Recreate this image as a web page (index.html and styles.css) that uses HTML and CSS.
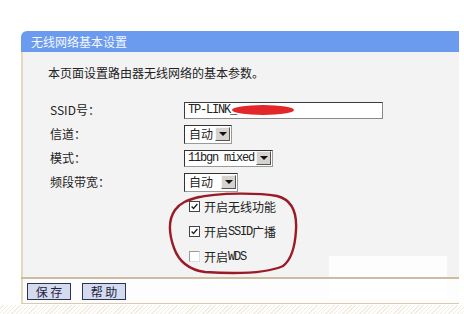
FILE: index.html
```html
<!DOCTYPE html>
<html lang="zh-CN">
<head>
<meta charset="utf-8">
<title>无线网络基本设置</title>
<link rel="stylesheet" href="styles.css">
</head>
<body>
<div class="page">
  <div class="panel">
    <div class="title">无线网络基本设置</div>
    <div class="content">
      <div class="intro">本页面设置路由器无线网络的基本参数。</div>
      <div class="form">
        <div class="label">SSID号：</div>
        <div class="ctl"><span class="input"><span class="mono">TP-LINK_</span><span class="blot"></span></span></div>
        <div class="label">信道：</div>
        <div class="ctl"><span class="sel w48"><span class="val">自动</span><span class="arrow"></span></span></div>
        <div class="label">模式：</div>
        <div class="ctl"><span class="sel w89"><span class="val mono">11bgn mixed</span><span class="arrow"></span></span></div>
        <div class="label">频段带宽：</div>
        <div class="ctl"><span class="sel w54"><span class="val">自动</span><span class="arrow"></span></span></div>
      </div>
      <div class="checks">
        <div class="chk"><span class="box"><svg width="11" height="11" viewBox="0 0 11 11"><path d="M2 5.5 L4.3 8 L9 2.5" fill="none" stroke="#222" stroke-width="1.6"/></svg></span>开启无线功能</div>
        <div class="chk"><span class="box"><svg width="11" height="11" viewBox="0 0 11 11"><path d="M2 5.5 L4.3 8 L9 2.5" fill="none" stroke="#222" stroke-width="1.6"/></svg></span>开启<span class="mono">SSID</span>广播</div>
        <div class="chk"><span class="box off"></span>开启<span class="mono">WDS</span></div>
      </div>
      <svg class="circle" width="150" height="95" viewBox="0 0 150 95">
        <path d="M30 8 C55 2 95 3 112 6 C128 10 132 24 131 40 C130 58 126 70 118 76 C100 84 70 84 40 82 C25 80 14 72 9 58 C4 44 3 30 10 20 C15 13 22 10 34 7" fill="none" stroke="#9a1b25" stroke-width="2.4" stroke-linecap="round"/>
      </svg>
      <div class="patch"></div>
    </div>
    <div class="divider"></div>
    <div class="btnbar">
      <span class="btn">保 存</span>
      <span class="btn">帮 助</span>
    </div>
    <div class="hatch"></div>
  </div>
</div>
</body>
</html>
```

FILE: styles.css
```css
html, body {
  margin: 0;
  padding: 0;
  background: #ffffff;
}
body {
  font-family: "Noto Sans CJK SC", "Liberation Sans", sans-serif;
  font-size: 12px;
  color: #222;
}
.page {
  padding: 31px 5px 0 21px;
}
.panel {
  width: 438px;
  position: relative;
}
.title {
  height: 21px;
  line-height: 21px;
  background: #6b9bef;
  border-top-left-radius: 6px;
  color: #f4f7ff;
  padding-left: 10px;
  font-size: 12px;
}
.content {
  position: relative;
  height: 225px;
  box-sizing: border-box;
  background: #f3f3f3;
  border-left: 2px solid #e4d8bf;
  padding: 13px 0 0 25px;
}
.intro {
  line-height: 16px;
  height: 16px;
  margin-bottom: 17px;
}
.form {
  display: grid;
  grid-template-columns: 134px auto;
  grid-auto-rows: 24px;
  padding-left: 2px;
}
.label {
  display: flex;
  align-items: center;
  line-height: 14px;
}
.ctl {
  display: flex;
  align-items: center;
}
.mono {
  font-family: "Liberation Mono", "DejaVu Sans Mono", monospace;
  letter-spacing: -1.2px;
  font-size: 12px;
}
.input {
  position: relative;
  display: flex;
  align-items: center;
  width: 199px;
  height: 17px;
  box-sizing: border-box;
  background: #fff;
  border: 1px solid #3c3c3c;
  border-right-color: #888;
  border-bottom-color: #888;
  padding-left: 3px;
  line-height: 14px;
}
.blot {
  position: absolute;
  left: 47px;
  top: 2px;
  width: 62px;
  height: 10px;
  border-radius: 50%;
  background: #e3262a;
}
.sel {
  display: flex;
  align-items: center;
  justify-content: space-between;
  height: 19px;
  box-sizing: border-box;
  background: #fff;
  border: 1px solid #333;
  border-right-color: #999;
  border-bottom-color: #999;
  padding: 0 1px 0 4px;
  line-height: 14px;
}
.w48 { width: 48px; }
.w54 { width: 54px; }
.w89 { width: 89px; height: 17px; padding-left: 3px; }
.arrow {
  position: relative;
  width: 15px;
  height: 14px;
  box-sizing: border-box;
  background: #d6d3ce;
  border: 1px solid;
  border-color: #f4f4f4 #555 #555 #f4f4f4;
}
.arrow::after {
  content: "";
  position: absolute;
  left: 3px;
  top: 4px;
  border-left: 4px solid transparent;
  border-right: 4px solid transparent;
  border-top: 4px solid #111;
}
.checks {
  padding-left: 141px;
}
.chk {
  display: flex;
  align-items: center;
  height: 25px;
  line-height: 14px;
}
.box {
  display: inline-flex;
  width: 11px;
  height: 11px;
  box-sizing: border-box;
  border: 1px solid #444;
  background: #fff;
  margin-right: 4px;
  align-items: center;
  justify-content: center;
}
.box svg {
  display: block;
}
.box.off {
  border-color: #9a9a9a;
  border-right-color: #ddd;
  border-bottom-color: #ddd;
}
.circle {
  position: absolute;
  left: 142px;
  top: 138px;
}
.patch {
  position: absolute;
  left: 306px;
  top: 204px;
  width: 118px;
  height: 21px;
  background: #fdfdfd;
}
.divider {
  height: 2px;
  background: #cbbca2;
}
.btnbar {
  position: relative;
  height: 25px;
  box-sizing: border-box;
  background: #fdfdfd;
  border-left: 2px solid #e4d8bf;
  border-bottom: 1px solid #d8cbb0;
  padding: 4px 0 0 4px;
  display: flex;
  gap: 11px;
  align-items: flex-start;
}
.btnbar::after {
  content: "";
  position: absolute;
  left: 306px;
  top: 0;
  width: 118px;
  height: 19px;
  background: #ffffff;
}
.btn {
  display: inline-flex;
  align-items: center;
  justify-content: center;
  width: 44px;
  height: 17px;
  box-sizing: border-box;
  background: #d5dbee;
  border: 1px solid #2c3356;
  color: #1b2340;
  line-height: 14px;
  font-size: 12px;
}
.hatch {
  height: 9px;
  margin-top: 1px;
  margin-left: -21px;
  width: 464px;
  background: repeating-linear-gradient(135deg, #ffffff 0 2px, #f3ece0 2px 3px);
}
```
